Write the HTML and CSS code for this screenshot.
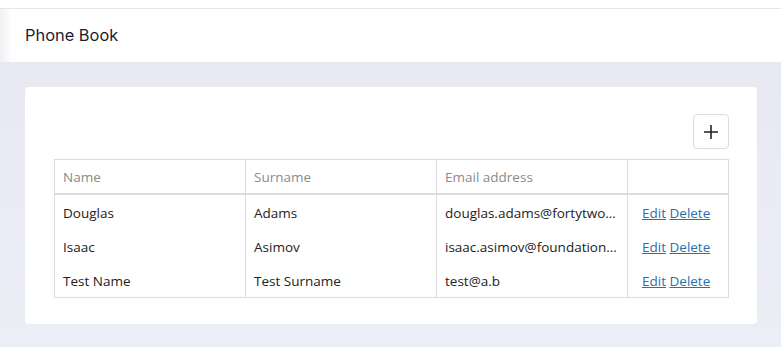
FILE: index.html
```html
<!DOCTYPE html>
<html lang="en">
  <head>
    <meta charset="UTF-8" />
    <meta name="viewport" content="width=device-width, initial-scale=1.0" />
    <title>Phone Book</title>
    <link rel="stylesheet" href="styles.css">
  </head>
  <body>
    <div class="topbar"></div>
    <header class="header">
      <h1>Phone Book</h1>
    </header>
    <main class="content">
      <div class="card">
        <div class="toolbar">
          <button class="add-btn" title="Add contact">
            <svg width="16" height="16" viewBox="0 0 16 16">
              <path d="M8 1v14M1 8h14" stroke="#222" stroke-width="1.6" fill="none" />
            </svg>
          </button>
        </div>
        <table class="contacts">
          <thead>
            <tr>
              <th class="col-name">Name</th>
              <th class="col-surname">Surname</th>
              <th class="col-email">Email address</th>
              <th class="col-actions"></th>
            </tr>
          </thead>
          <tbody>
            <tr>
              <td>Douglas</td>
              <td>Adams</td>
              <td>douglas.adams@fortytwo.com</td>
              <td class="actions"><a href="#">Edit</a> <a href="#">Delete</a></td>
            </tr>
            <tr>
              <td>Isaac</td>
              <td>Asimov</td>
              <td>isaac.asimov@foundation.org</td>
              <td class="actions"><a href="#">Edit</a> <a href="#">Delete</a></td>
            </tr>
            <tr>
              <td>Test Name</td>
              <td>Test Surname</td>
              <td>test@a.b</td>
              <td class="actions"><a href="#">Edit</a> <a href="#">Delete</a></td>
            </tr>
          </tbody>
        </table>
      </div>
    </main>
  </body>
</html>
```

FILE: styles.css
```css
body {
  margin: 0;
  font-family: "Open Sans", Arial, sans-serif;
  background-color: #eceef6;
  min-height: 347px;
}
.topbar {
  height: 8px;
  background-color: #fff;
  border-bottom: 1px solid #e6e6ee;
}
.header {
  height: 53px;
  background: linear-gradient(to right, #f1f1f4 0, #fff 12px);
  display: flex;
  align-items: center;
  padding-left: 25px;
  padding-bottom: 1px;
  box-sizing: border-box;
}
.header h1 {
  margin: 0;
  font-family: Inter, "Noto Sans", sans-serif;
  font-weight: 400;
  font-size: 16.4px;
  color: #1c1c2e;
}
.content {
  padding: 25px 24px 22px 25px;
  background: linear-gradient(to bottom, #e8e8f3, #eceef6);
}
.card {
  background-color: #fff;
  border-radius: 4px;
  padding: 27px 28px 26px 29px;
}
.toolbar {
  display: flex;
  justify-content: flex-end;
  margin-bottom: 10px;
}
.add-btn {
  width: 36px;
  height: 35px;
  border: 1px solid #dcdcdc;
  border-radius: 4px;
  background-color: #fff;
  display: flex;
  align-items: center;
  justify-content: center;
  padding: 0;
  cursor: pointer;
}
.contacts {
  width: 100%;
  border-collapse: collapse;
  table-layout: fixed;
  font-size: 13.5px;
  border: 1px solid #dcdcdc;
}
.contacts th {
  text-align: left;
  font-weight: 400;
  color: #8a8a8a;
  height: 33px;
  padding: 0 8px;
  border: 1px solid #dcdcdc;
  border-bottom: 2px solid #dcdcdc;
}
.contacts td {
  height: 33px;
  padding: 1px 8px 0;
  color: #222;
  border-left: 1px solid #dcdcdc;
  border-right: 1px solid #dcdcdc;
  white-space: nowrap;
  overflow: hidden;
  text-overflow: ellipsis;
}
.col-name { width: 174px; }
.col-surname { width: 174px; }
.col-email { width: 174px; }
.contacts td.actions {
  padding-left: 14px;
}
.actions a {
  color: #2a6fb0;
}
```
